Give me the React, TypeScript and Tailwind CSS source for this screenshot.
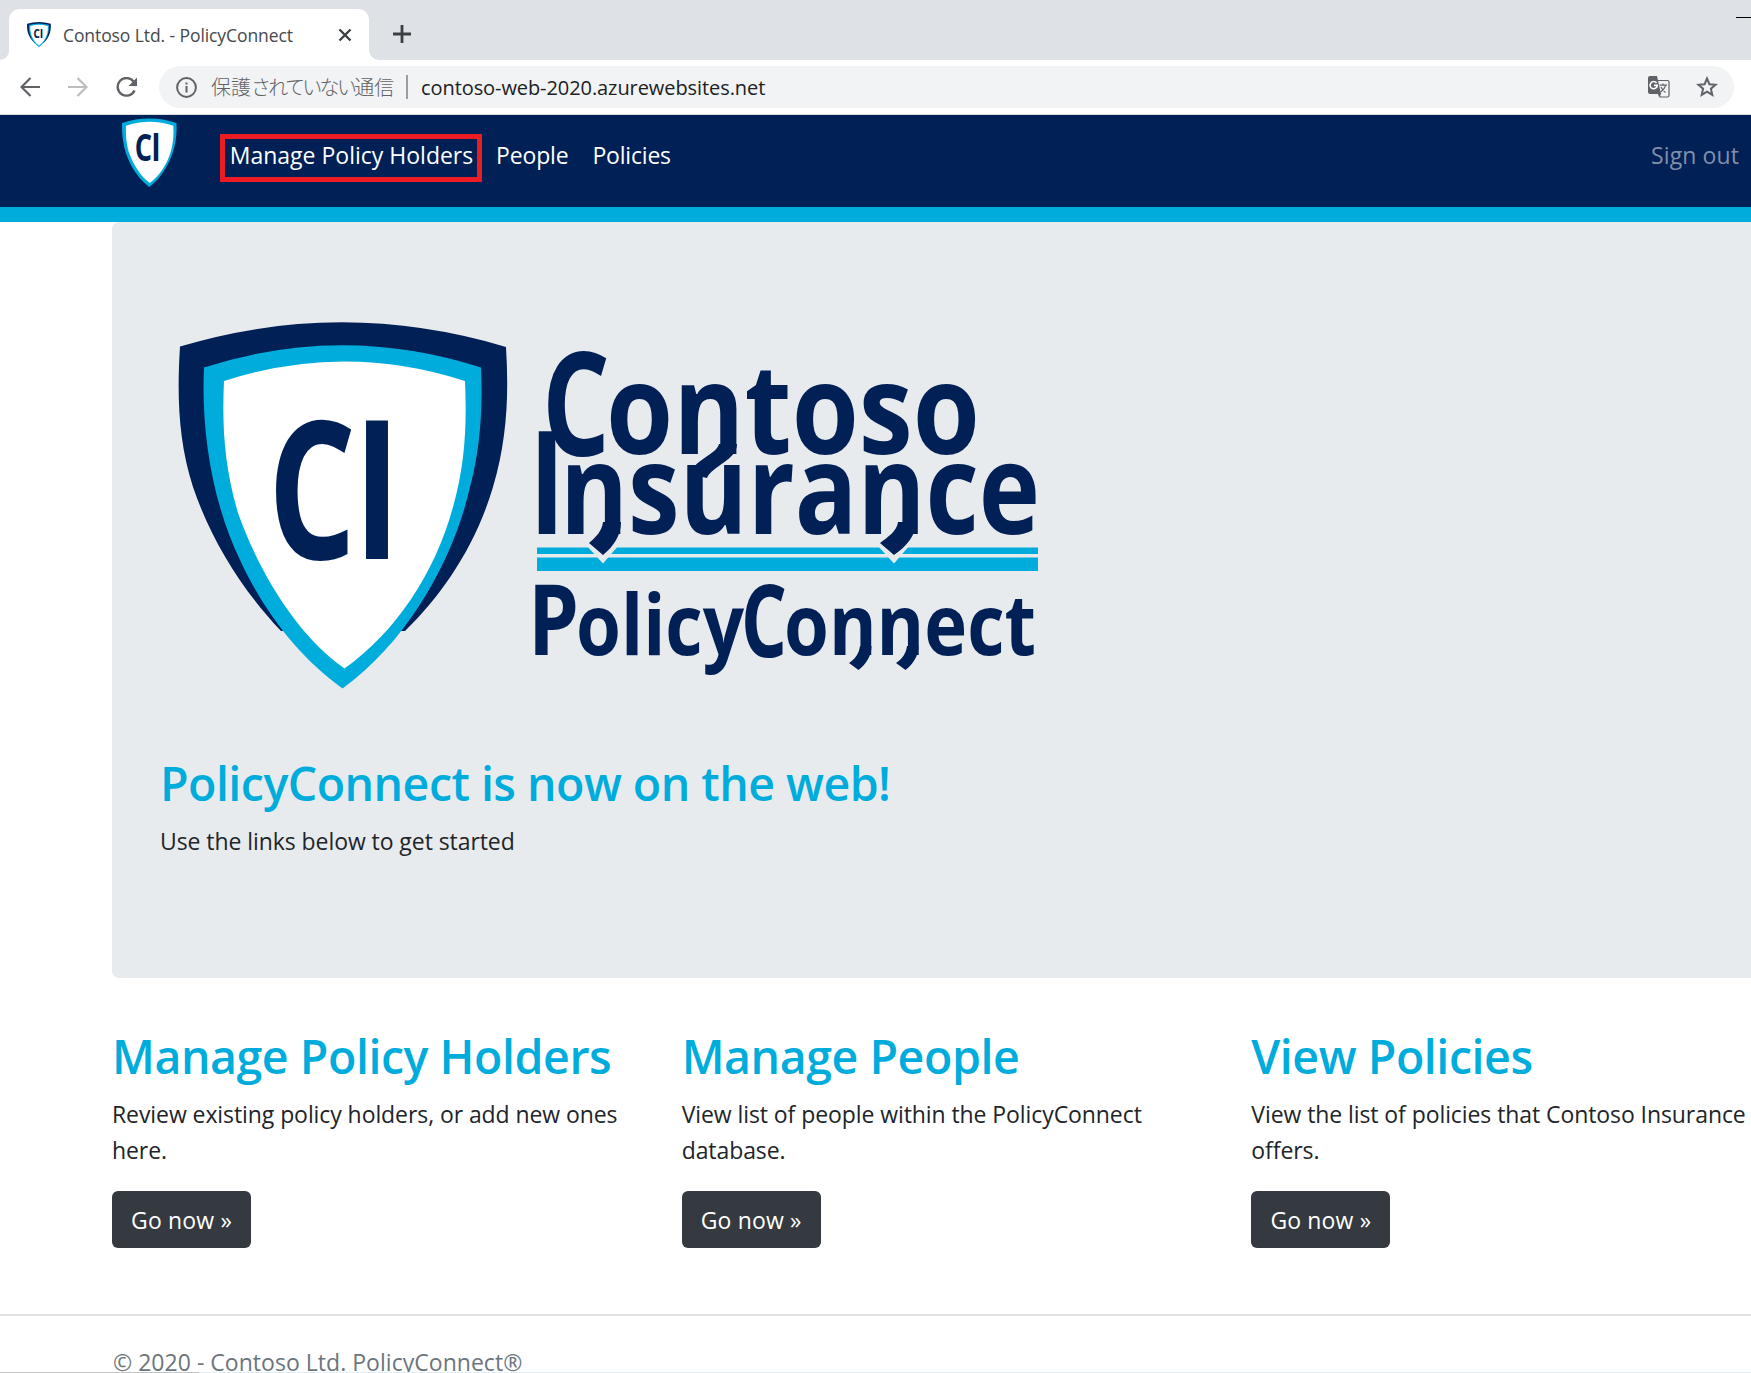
import React from "react";

const NAVY = "#002056";
const CYAN = "#00acdc";

function Shield({ className, backed = true }: { className: string; backed?: boolean }) {
  return (
    <svg className={className} viewBox="178 322 331 367" preserveAspectRatio="none" aria-label="Contoso shield">
      {backed && (
        <path
          d="M180 346.5Q342 298 506 347C509 395 507 440 493 487C476 545 443 594 405 631L281 631C242 590 211 540 193 487C178 440 177 395 180 346.5Z"
          fill={NAVY}
        />
      )}
      <path
        d="M204 367.500Q342 323 481 367.500C483 410 480 450 470 487C455 555 410 640 342.500 688.500C300 658 265 614 240 560C212 502 201 430 204 367.500Z"
        fill={CYAN}
      />
      <path
        d="M224 381Q345 342 465 381C467 425 465 465 453 507C435 573 396 632 344.500 668.500C299 637 260 575 238 513C224 465 222 425 224 381Z"
        fill="#fff"
      />
      <g fill={NAVY} fontFamily="Open Sans, sans-serif" fontWeight={700}>
        <text x="268" y="559" fontSize="192" textLength="88" lengthAdjust="spacingAndGlyphs">C</text>
        <text x="353" y="559" fontSize="194" textLength="48" lengthAdjust="spacingAndGlyphs">I</text>
      </g>
    </svg>
  );
}

function Wordmark() {
  const fit = { lengthAdjust: "spacingAndGlyphs" as const };
  return (
    <svg className="h-[350px] w-[512px]" viewBox="530 340 512 350">
      <path d="M537 547.500H1038V554H537ZM537 557.500H1038V571H537Z" fill={CYAN} />
      <path d="M586 545L603 563.500L619 545ZM877 545L894 563.500L910 545Z" fill="#e8ebee" />
      <g fill={NAVY}>
        <path d="M603 522C602 531 596 537 589 543L603 555C614 546 621 535 621 522Z" />
        <path d="M898 522C897 531 888 537 880 543L894 555C907 546 916 535 916 522Z" />
        <path d="M860 646C859 654 855 659 849 663L858.500 670C866 664 871.500 656 871.500 646Z" />
        <path d="M907 646C906 654 902 659 896 663L905.500 670C913 664 918.500 656 918.500 646Z" />
        <path d="M719 444C717 454 694 460 690 474L707 478C712 466 737 460 737 444Z" />
      </g>
      <g fill={NAVY} fontFamily="Open Sans, sans-serif" fontWeight={700}>
        <text x="542" y="455.500" fontSize="143" textLength="68" {...fit}>C</text>
        <text x="606" y="454" fontSize="125" textLength="374" {...fit}>ontoso</text>
        <text x="529" y="534" fontSize="143" textLength="36" {...fit}>I</text>
        <text x="560" y="534" fontSize="125" textLength="480" {...fit}>nsurance</text>
        <text x="528" y="655" fontSize="98" textLength="51" {...fit}>P</text>
        <text x="576" y="655" fontSize="85" textLength="168" {...fit}>olicy</text>
        <text x="741" y="656.500" fontSize="100" textLength="46" {...fit}>C</text>
        <text x="784" y="655" fontSize="85" textLength="252" {...fit}>onnect</text>
      </g>
    </svg>
  );
}

function TranslateIcon() {
  return (
    <svg className="h-[22px] w-[22px]" viewBox="0 0 22 22" fill="none">
      <path d="M10 4.500H19.500a1.500 1.500 0 0 1 1.500 1.500V19.500a1.500 1.500 0 0 1-1.500 1.500H12L10.500 17" stroke="#5f6368" strokeWidth="1.200" />
      <path d="M2 0H9L13 18L11 18H2a2 2 0 0 1-2-2V2a2 2 0 0 1 2-2Z" fill="#5f6368" />
      <path d="M10 17.500L13.500 17.500L11 21Z" fill="#5f6368" />
      <path d="M8.600 7A3.600 3.600 0 1 0 9.300 9.400H6" stroke="#fff" strokeWidth="1.600" />
      <path d="M11.500 9.200H19M15 7.500V9M17.500 9.200C17 12 15 14.500 12.500 16M13 11C14 13.500 15.500 15 17.500 16.500" stroke="#5f6368" strokeWidth="1.200" />
    </svg>
  );
}

function BrowserChrome() {
  return (
    <header>
      <div className="flex h-[60px] bg-[#dee1e6]">
        <div className="flex h-full w-[9px] items-end bg-white">
          <div className="h-full w-[9px] rounded-br-[9px] bg-[#dee1e6]" />
        </div>
        <div className="flex h-full w-[360px] flex-col">
          <div className="h-[9px] shrink-0 bg-[#dee1e6]" />
          <div className="flex flex-1 items-center rounded-t-[11px] bg-white pl-[18px] pr-[17px]">
            <Shield className="mt-[-1px] h-[25px] w-[24px]" />
            <span className="ml-[12px] mt-[2px] flex-1 whitespace-nowrap text-[17.5px] tracking-[-0.09px] text-[#45494d]">Contoso Ltd. - PolicyConnect</span>
            <svg className="h-[14px] w-[14px]" viewBox="0 0 14 14" stroke="#3c4043" strokeWidth="2.400">
              <path d="M1.500 1.500L12.500 12.500M12.500 1.500L1.500 12.500" />
            </svg>
          </div>
        </div>
        <div className="h-full w-[10px] bg-white">
          <div className="h-full w-full rounded-bl-[10px] bg-[#dee1e6]" />
        </div>
        <svg className="ml-[14px] mt-[25px] h-[18px] w-[18px]" viewBox="0 0 18 18" stroke="#3c4043" strokeWidth="2.800">
          <path d="M9 0V18M0 9H18" />
        </svg>
        <div className="ml-auto mt-[17px] h-px w-[15px] bg-black" />
      </div>
      <div className="flex h-[55px] items-center border-b border-[#dadce0] bg-white pr-[17px]">
        <svg className="ml-[20px] h-[20px] w-[20px]" viewBox="0 0 20 20" fill="none" stroke="#5f6368" strokeWidth="2.200">
          <path d="M20 10H2M10.500 1L1.500 10L10.500 19" />
        </svg>
        <svg className="ml-[28px] h-[20px] w-[20px]" viewBox="0 0 20 20" fill="none" stroke="#bbbdc0" strokeWidth="2.200">
          <path d="M0 10H18M9.500 1L18.500 10L9.500 19" />
        </svg>
        <svg className="ml-[28px] h-[21px] w-[22px]" viewBox="0 0 22 21" fill="none">
          <path d="M17.500 4.500A8.800 8.800 0 1 0 18.500 13.500" stroke="#5f6368" strokeWidth="2.400" />
          <path d="M21 0.500V9H12.500Z" fill="#5f6368" />
        </svg>
        <div className="ml-[21px] flex h-[42px] flex-1 items-center rounded-full bg-[#f1f3f4] pl-[17px] pr-[16px]">
          <svg className="h-[21px] w-[21px]" viewBox="0 0 21 21" fill="none" stroke="#5f6368" strokeWidth="2">
            <circle cx="10.500" cy="10.500" r="9.400" />
            <path d="M10.500 9V15.500M10.500 5.500V7.500" />
          </svg>
          <span className="ml-[14px] mt-px w-[184px] whitespace-nowrap text-[20px] font-light text-[#5f6368]">
            保護<span className="tracking-[-2.7px]">されていない</span>通信
          </span>
          <span className="ml-[11px] h-[24px] w-[2px] bg-[#9a9da1]" />
          <span className="ml-[13px] mt-px whitespace-nowrap text-[20px] tracking-[-0.08px] text-[#202124]">contoso-web-2020.azurewebsites.net</span>
          <div className="ml-auto flex items-center gap-[26px]">
            <TranslateIcon />
            <svg className="h-[22px] w-[22px]" viewBox="0 0 22 22" fill="none" stroke="#5f6368" strokeWidth="2">
              <path d="M11 2.500L13.400 8.200L19.600 8.700L14.900 12.700L16.300 18.900L11 15.600L5.700 18.900L7.100 12.700L2.400 8.700L8.600 8.200Z" />
            </svg>
          </div>
        </div>
      </div>
    </header>
  );
}

function NavBar() {
  return (
    <nav className="flex h-[107px] border-b-[15px] border-[#00acdc] bg-[#002056] text-[23px] leading-[36px] text-white">
      <Shield backed={false} className="ml-[117px] mt-[-1px] h-[73px] w-[65px]" />
      <a className="ml-[38px] mt-[19px] flex h-[48px] w-[262px] justify-center whitespace-nowrap border-[5px] border-[#ed1c24] pl-px leading-[32px]">Manage Policy Holders</a>
      <a className="ml-[14px] mt-[22px] tracking-[-0.15px]">People</a>
      <a className="ml-[24px] mt-[22px] tracking-[-0.2px]">Policies</a>
      <a className="ml-auto mr-[12px] mt-[22px] tracking-[0.1px] text-[#808fab]">Sign out</a>
    </nav>
  );
}

function Card({ title, children }: { title: string; children: React.ReactNode }) {
  return (
    <section className="w-[569.67px] shrink-0">
      <h2 className="whitespace-nowrap text-[46.5px] font-semibold leading-[58px] tracking-[-0.45px] text-[#00acdc]">{title}</h2>
      <p className="mt-[11px] whitespace-nowrap text-[23px] leading-[36px] tracking-[-0.08px]">{children}</p>
      <button className="mt-[23px] h-[57px] w-[139px] rounded-[6px] bg-[#343a40] pt-[2px] text-[23px] tracking-[0.15px] text-white">Go now »</button>
    </section>
  );
}

export default function App() {
  return (
    <div className="relative h-[1373px] w-[1751px] overflow-hidden bg-white font-['Open_Sans','Noto_Sans_CJK_JP',sans-serif] text-[#212529]">
      <BrowserChrome />
      <NavBar />
      <main className="ml-[112px]">
        <div className="h-[756px] rounded-l-[7px] bg-[#e8ebee] pl-[48px] pt-[100px]">
          <div className="flex">
            <Shield className="ml-[18px] h-[367px] w-[331px]" />
            <div className="ml-[21px] mt-[18px]">
              <Wordmark />
            </div>
          </div>
          <h2 className="mt-[64px] text-[46.5px] font-semibold leading-[58px] tracking-[-0.52px] text-[#00acdc]">PolicyConnect is now on the web!</h2>
          <p className="mt-[11px] text-[23px] leading-[36px] tracking-[-0.07px]">Use the links below to get started</p>
        </div>
        <div className="mt-[49px] flex">
          <Card title="Manage Policy Holders">Review existing policy holders, or add new ones<br />here.</Card>
          <Card title="Manage People">View list of people within the PolicyConnect<br />database.</Card>
          <Card title="View Policies">View the list of policies that Contoso Insurance<br />offers.</Card>
        </div>
      </main>
      <footer className="mt-[66px] border-t-2 border-[#dee2e6] pl-[113px] pt-[28px] text-[23px] leading-[36px] tracking-[0.03px] text-[#6c757d]">
        © 2020 - Contoso Ltd. PolicyConnect®
      </footer>
      <div className="absolute bottom-0 left-0 flex h-px w-full bg-[#e1ebf3]">
        <div className="w-[199px] bg-[#c4c4c4]" />
      </div>
    </div>
  );
}
